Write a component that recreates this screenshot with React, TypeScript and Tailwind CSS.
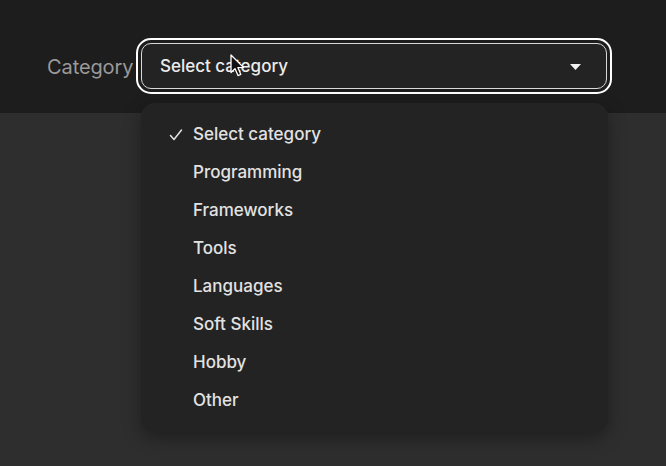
import React from 'react';

const categories = ['Select category', 'Programming', 'Frameworks', 'Tools', 'Languages', 'Soft Skills', 'Hobby', 'Other'];

const CheckIcon = () => (
  <svg width="14" height="14" viewBox="0 0 14 14" fill="none">
    <path d="M1.5 7.5 L5 11.5 L12.5 2" stroke="#e2e2e2" strokeWidth="1.5" strokeLinecap="round" strokeLinejoin="round" />
  </svg>
);

const Cursor = () => (
  <svg className="absolute left-[230px] top-[54px] pointer-events-none" width="15" height="24" viewBox="0 0 15 24">
    <path d="M1 1 L1 18.5 L5 14.6 L8 21.6 L10.8 20.4 L7.9 13.6 L13.4 13.4 Z" fill="#111" stroke="#fff" strokeWidth="1.3" strokeLinejoin="round" />
  </svg>
);

export default function App() {
  return (
    <div className="relative h-[466px] w-full overflow-hidden bg-[#2e2e2e] font-['Inter','Noto_Sans',sans-serif]">
      {/* Top bar with the select */}
      <div className="flex h-[113px] items-start bg-[#1d1d1d] pl-[47px] pt-[43px]">
        <label className="mr-[8px] flex h-[46px] w-[86px] items-center pt-[2px] text-[20px] tracking-[-0.1px] text-[#9a9a9a]">Category</label>
        <button className="flex h-[46px] w-[466px] items-center justify-between rounded-[10px] border border-[#d8d8d8] bg-[#232323] pl-[18px] pr-[25px] pt-[2px] text-[17px] font-medium text-[#ececec] outline-2 outline-offset-[3px] outline-white">
          <span>Select category</span>
          <svg width="11" height="6" viewBox="0 0 11 6">
            <path d="M0 0 H11 L5.5 6 Z" fill="#f2f2f2" />
          </svg>
        </button>
      </div>

      {/* Open listbox */}
      <ul className="absolute left-[141px] top-[103px] w-[467px] rounded-[14px] bg-[#232323] pb-[12px] pt-[13px] shadow-[0_6px_18px_rgba(0,0,0,0.35)]">
        {categories.map((c, i) => (
          <li key={c} className="flex h-[38px] items-center text-[17px] font-medium text-[#e2e2e2]">
            <span className="flex w-[52px] justify-end pr-[10px]">{i === 0 && <CheckIcon />}</span>
            <span>{c}</span>
          </li>
        ))}
      </ul>

      <Cursor />
    </div>
  );
}
